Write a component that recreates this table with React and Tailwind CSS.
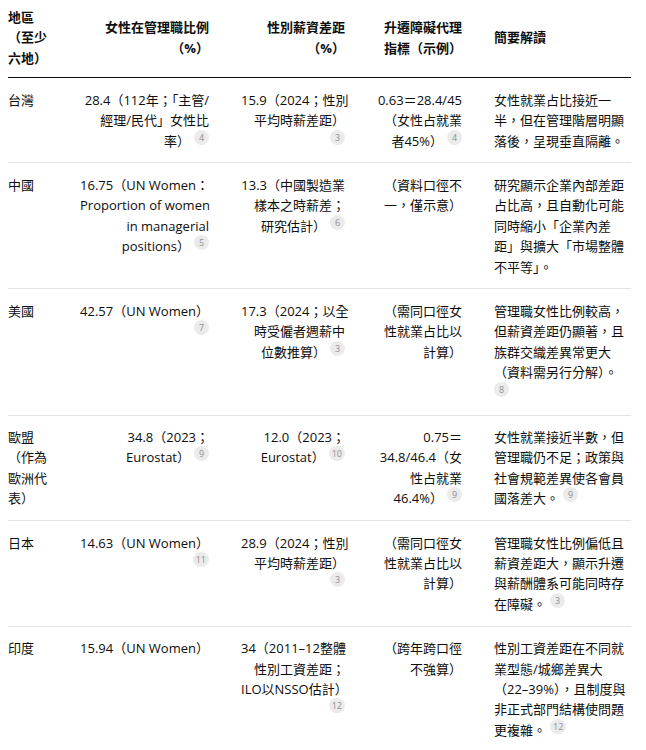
import React, { Fragment } from "react";

const Badge = ({ n, first }) => (
  <span
    className={`relative -top-[5px] inline-block h-[15px] min-w-[15px] rounded-full bg-[#ebebeb] px-[3px] text-center align-baseline text-[9px] font-normal leading-[15px] text-[#8f8f8f] ${
      first ? "" : "ml-[4px]"
    }`}
  >
    {n}
  </span>
);

const Lines = ({ lines }) => (
  <>
    {lines.map((l, i) => {
      const obj = typeof l === "string" ? { t: l } : l;
      return (
        <Fragment key={i}>
          {i > 0 && <br />}
          {obj.t}
          {obj.b !== undefined && <Badge n={obj.b} first={!obj.t} />}
        </Fragment>
      );
    })}
  </>
);

const header = [
  ["地區", "（至少", "六地）"],
  ["女性在管理職比例", "（%）"],
  ["性別薪資差距", "（%）"],
  ["升遷障礙代理", "指標（示例）"],
  ["簡要解讀"],
];

const rows = [
  [
    ["台灣"],
    ["28.4（112年；「主管/", "經理/民代」女性比", { t: "率）", b: 4 }],
    ["15.9（2024；性別", "平均時薪差距）", { b: 3 }],
    ["0.63＝28.4/45", "（女性占就業", { t: "者45%）", b: 4 }],
    ["女性就業占比接近一", "半，但在管理階層明顯", "落後，呈現垂直隔離。"],
  ],
  [
    ["中國"],
    ["16.75（UN Women：", "Proportion of women", "in managerial", { t: "positions）", b: 5 }],
    ["13.3（中國製造業", "樣本之時薪差；", { t: "研究估計）", b: 6 }],
    ["（資料口徑不", "一，僅示意）"],
    ["研究顯示企業內部差距", "占比高，且自動化可能", "同時縮小「企業內差", "距」與擴大「市場整體", "不平等」。"],
  ],
  [
    ["美國"],
    ["42.57（UN Women）", { b: 7 }],
    ["17.3（2024；以全", "時受僱者週薪中", { t: "位數推算）", b: 3 }],
    ["（需同口徑女", "性就業占比以", "計算）"],
    ["管理職女性比例較高，", "但薪資差距仍顯著，且", "族群交織差異常更大", "（資料需另行分解）。", { b: 8 }],
  ],
  [
    ["歐盟", "（作為", "歐洲代", "表）"],
    ["34.8（2023；", { t: "Eurostat）", b: 9 }],
    ["12.0（2023；", { t: "Eurostat）", b: 10 }],
    ["0.75＝", "34.8/46.4（女", "性占就業", { t: "46.4%）", b: 9 }],
    ["女性就業接近半數，但", "管理職仍不足；政策與", "社會規範差異使各會員", { t: "國落差大。", b: 9 }],
  ],
  [
    ["日本"],
    ["14.63（UN Women）", { b: 11 }],
    ["28.9（2024；性別", "平均時薪差距）", { b: 3 }],
    ["（需同口徑女", "性就業占比以", "計算）"],
    ["管理職女性比例偏低且", "薪資差距大，顯示升遷", "與薪酬體系可能同時存", { t: "在障礙。", b: 3 }],
  ],
  [
    ["印度"],
    ["15.94（UN Women）"],
    ["34（2011–12整體", "性別工資差距；", "ILO以NSSO估計）", { b: 12 }],
    ["（跨年跨口徑", "不強算）"],
    ["性別工資差距在不同就", "業型態/城鄉差異大", "（22–39%），且制度與", "非正式部門結構使問題", { t: "更複雜。", b: 12 }],
  ],
];

const thCls = [
  "pl-0 pr-4 text-left",
  "px-4 text-right",
  "px-4 text-right",
  "px-4 text-right",
  "pl-4 pr-0 text-left",
];

export default function App() {
  return (
    <div className="min-h-[750px] w-[646px] overflow-hidden bg-white pl-2 font-[family-name:'Open_Sans','Noto_Sans_CJK_TC',sans-serif] text-[13px] leading-[20.4px] text-[#0d0d0d]">
      <table className="w-[623px] table-fixed border-collapse">
        <colgroup>
          <col className="w-[56px]" />
          <col className="w-[161px]" />
          <col className="w-[136px]" />
          <col className="w-[117px]" />
          <col className="w-[153px]" />
        </colgroup>
        <thead>
          <tr className="border-b border-[#0d0d0d]">
            {header.map((h, i) => (
              <th
                key={i}
                className={`whitespace-nowrap pt-[7px] pb-[9px] align-middle font-bold ${thCls[i]}`}
              >
                <Lines lines={h} />
              </th>
            ))}
          </tr>
        </thead>
        <tbody>
          {rows.map((r, ri) => (
            <tr key={ri} className="border-b border-[#e3e3e3] last:border-b-0">
              {r.map((c, ci) => (
                <td
                  key={ci}
                  className={`whitespace-nowrap py-[11.5px] align-top ${thCls[ci]}`}
                >
                  <Lines lines={c} />
                </td>
              ))}
            </tr>
          ))}
        </tbody>
      </table>
    </div>
  );
}
